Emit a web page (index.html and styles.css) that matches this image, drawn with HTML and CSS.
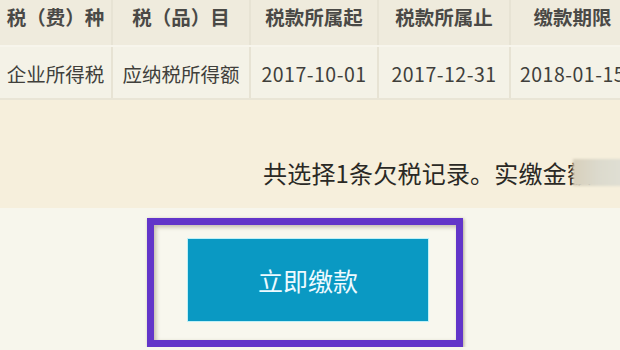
FILE: index.html
```html
<!DOCTYPE html>
<html lang="zh-CN">
<head>
<meta charset="utf-8">
<link rel="stylesheet" href="styles.css">
</head>
<body>
<div class="page">
  <table class="tax-table">
    <colgroup>
      <col class="c1"><col class="c2"><col class="c3"><col class="c4"><col class="c5">
    </colgroup>
    <thead>
      <tr>
        <th>税（费）种</th>
        <th>税（品）目</th>
        <th>税款所属起</th>
        <th>税款所属止</th>
        <th>缴款期限</th>
      </tr>
    </thead>
    <tbody>
      <tr>
        <td>企业所得税</td>
        <td>应纳税所得额</td>
        <td class="num">2017-10-01</td>
        <td class="num">2017-12-31</td>
        <td class="num">2018-01-15</td>
      </tr>
    </tbody>
  </table>
  <div class="summary">
    <span class="summary-text">共选择1条欠税记录。实缴金额</span><span class="masked"></span>
  </div>
  <div class="actions">
    <div class="highlight">
      <button class="pay-btn">立即缴款</button>
    </div>
  </div>
</div>
</body>
</html>
```

FILE: styles.css
```css
html, body {
  margin: 0;
  padding: 0;
}
body {
  width: 620px;
  height: 350px;
  overflow: hidden;
  background: #f7f6ec;
  font-family: "Noto Sans CJK SC", "Noto Sans", sans-serif;
  color: #474744;
}
.page {
  width: 620px;
  overflow: hidden;
}
.tax-table {
  table-layout: fixed;
  width: 634px;
  border-collapse: collapse;
  font-size: 19.5px;
}
.c1 { width: 112px; }
.c2 { width: 138px; }
.c3 { width: 128px; }
.c4 { width: 132px; }
.c5 { width: 124px; }
.tax-table th,
.tax-table td {
  border-left: 2px solid #e7e3d4;
  text-align: center;
  white-space: nowrap;
  overflow: hidden;
  padding: 0;
}
.tax-table th:first-child,
.tax-table td:first-child {
  border-left: none;
}
.tax-table th {
  height: 45px;
  line-height: 34px;
  vertical-align: top;
  background: #efebdd;
  font-weight: bold;
  color: #4a4946;
  border-bottom: 2px solid #f7f5ec;
}
.tax-table td {
  height: 49px;
  background: #f4f2e7;
  border-bottom: 2px solid #e9e5d6;
  vertical-align: middle;
  padding-top: 2px;
  color: #403f3b;
}
.tax-table td.num {
  letter-spacing: 0.5px;
}
.summary {
  height: 108px;
  background: #f6efdc;
  display: flex;
  align-items: center;
  padding-left: 263px;
  padding-top: 36px;
  box-sizing: border-box;
  white-space: nowrap;
  overflow: hidden;
}
.summary-text {
  font-size: 24px;
  color: #2a2925;
  font-weight: 400;
  letter-spacing: 0.2px;
}
.masked {
  display: inline-block;
  flex: none;
  width: 64px;
  height: 27px;
  margin-left: -18px;
  background: linear-gradient(90deg, #d8d0bc 0%, #dcdacd 40%, #e2e2d8 100%);
  filter: blur(1px);
}
.actions {
  padding: 10px 0 0 147px;
}
.highlight {
  width: 316px;
  height: 129px;
  box-sizing: border-box;
  border: 7px solid #6235c9;
  background: #f8f7ee;
  padding: 14px 0 0 34px;
  box-shadow: 1px 1px 3px rgba(90, 70, 40, 0.45), inset 2px 2px 4px rgba(90, 70, 40, 0.35);
}
.pay-btn {
  display: block;
  width: 240px;
  height: 82px;
  border: none;
  background: #0a99c3;
  box-shadow: 0 0 0 1px #bff0f7;
  color: #eefaff;
  font-family: "Noto Sans CJK SC", "Noto Sans", sans-serif;
  font-size: 25px;
  padding: 0;
  margin: 0;
}
```
